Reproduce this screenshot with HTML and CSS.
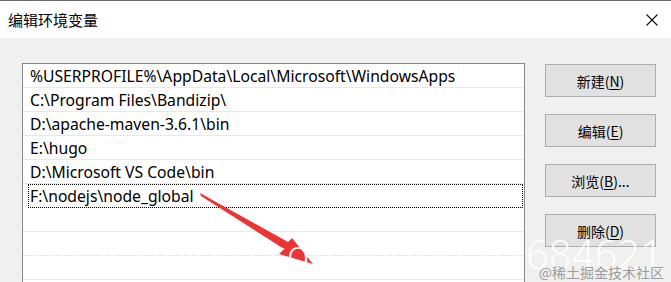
FILE: index.html
```html
<!DOCTYPE html>
<html lang="zh-CN">
<head>
    <meta charset="UTF-8">
    <title>编辑环境变量</title>
    <link rel="stylesheet" href="styles.css">
</head>
<body>
    <div class="dialog">
        <div class="titlebar">
            <span class="title">编辑环境变量</span>
            <svg class="close" width="12" height="12" viewBox="0 0 12 12">
                <path d="M0.5 0.5 L11.5 11.5 M11.5 0.5 L0.5 11.5" stroke="#111" stroke-width="1.1" fill="none"/>
            </svg>
        </div>

        <div class="content">
            <ul class="path-list">
                <li>%USERPROFILE%\AppData\Local\Microsoft\WindowsApps</li>
                <li>C:\Program Files\Bandizip\</li>
                <li>D:\apache-maven-3.6.1\bin</li>
                <li>E:\hugo</li>
                <li>D:\Microsoft VS Code\bin</li>
                <li class="focused">F:\nodejs\node_global</li>
                <li></li>
                <li></li>
                <li></li>
            </ul>

            <div class="actions">
                <button>新建(<u>N</u>)</button>
                <button>编辑(<u>E</u>)</button>
                <button>浏览(<u>B</u>)...</button>
                <button>删除(<u>D</u>)</button>
            </div>
        </div>

        <!-- red arrow drawn on the screenshot -->
        <svg class="arrow" width="671" height="282" viewBox="0 0 671 282">
            <path d="M200 193 L288 242 L292 238 L313 264 L279 254 L284 249 L201 196 Z" fill="#ec3434"/>
        </svg>

        <div class="watermark">https://blog.csdn.net/qq_41684621</div>
        <div class="credit">@稀土掘金技术社区</div>
    </div>
</body>
</html>
```

FILE: styles.css
```css
body {
    margin: 0;
    font-family: "Noto Sans", "Noto Sans CJK SC", sans-serif;
    color: #000;
}
.dialog {
    position: relative;
    width: 671px;
    height: 282px;
    overflow: hidden;
    background-color: #f0f0f0;
}
.titlebar {
    height: 37px;
    border-top: 1px solid #6b6b6b;
    background-color: #fff;
    display: flex;
    align-items: center;
    justify-content: space-between;
    padding: 0 13px 0 8px;
}
.title {
    font-family: "Noto Sans CJK SC", sans-serif;
    font-size: 15px;
    margin-top: -1px;
}
.content {
    display: flex;
    gap: 20px;
    padding: 25px 0 0 22px;
}
.path-list {
    list-style: none;
    margin: 0;
    padding: 0;
    width: 501px;
    height: 230px;
    border: 1px solid #828790;
    border-bottom: none;
    background-color: #fff;
}
.path-list li {
    height: 23px;
    line-height: 25px;
    border-bottom: 1px solid #e8e8e8;
    padding-left: 7px;
    font-size: 15.7px;
    white-space: nowrap;
    overflow: hidden;
}
.path-list li.focused {
    outline: 1px dotted #000;
    outline-offset: -1px;
    margin: 0 1px 0 5px;
    padding-left: 2px;
}
.actions {
    display: flex;
    flex-direction: column;
    gap: 17px;
    padding-top: 1px;
}
button {
    width: 111px;
    height: 33px;
    background-color: #e1e1e1;
    border: 1px solid #adadad;
    font-family: "Noto Sans CJK SC", sans-serif;
    font-size: 14px;
    color: #000;
    padding: 0;
}
button u {
    text-underline-offset: 2px;
}
.arrow {
    position: absolute;
    left: 0;
    top: 0;
}
.watermark {
    position: absolute;
    right: 8px;
    top: 226px;
    font-family: "Open Sans", sans-serif;
    font-weight: 300;
    font-size: 40px;
    color: rgba(255, 255, 255, 0.96);
    white-space: nowrap;
}
.credit {
    position: absolute;
    right: 7px;
    top: 262px;
    font-family: "Noto Sans CJK SC", sans-serif;
    font-size: 14px;
    color: #9d9d9d;
}
```
